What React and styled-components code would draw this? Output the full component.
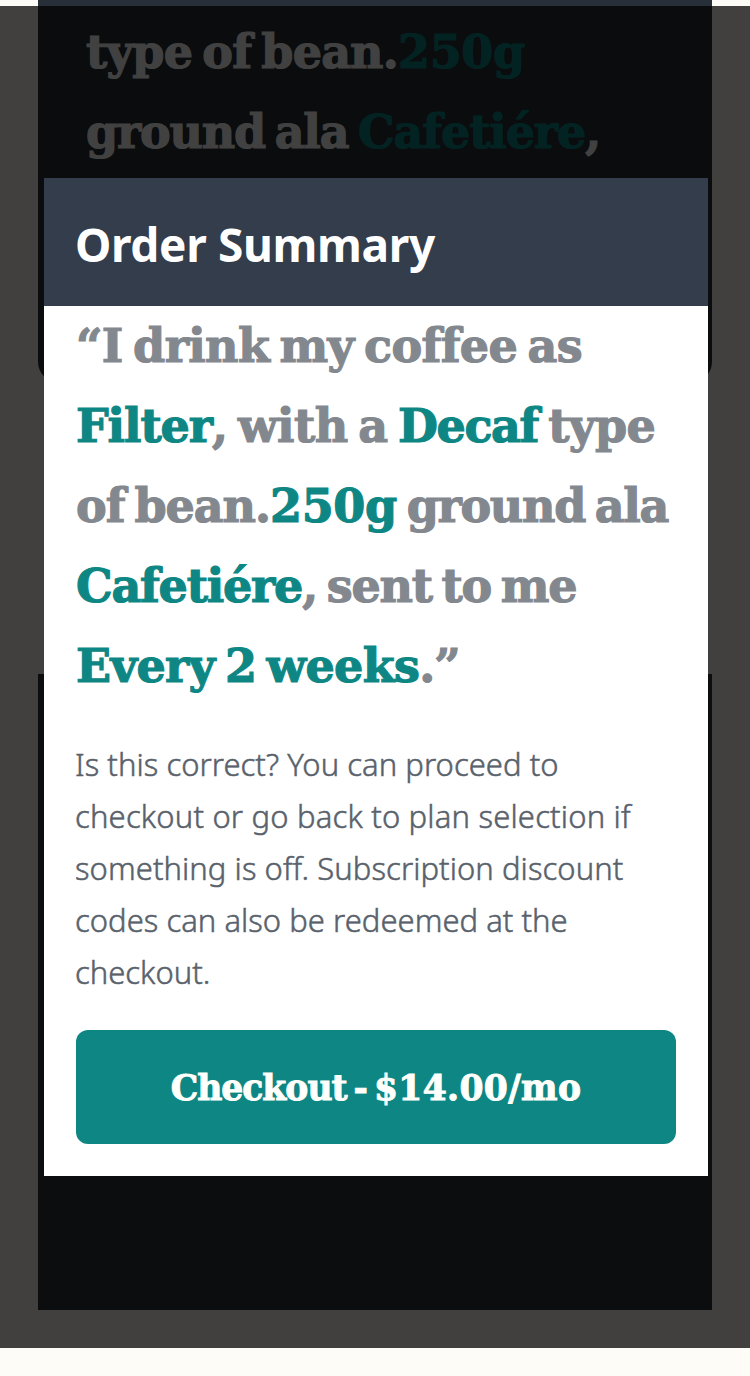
import React from 'react';
import styled, { createGlobalStyle } from 'styled-components';

const GlobalStyle = createGlobalStyle`
  * { box-sizing: border-box; }
  html, body { margin: 0; padding: 0; background: #fefcf7; }
  h2, p { margin: 0; }
`;

const serif = '"DejaVu Serif", serif';

const Page = styled.div`
  position: relative;
  height: 1376px;
  padding: 0 38px 66px;
  display: flex;
  flex-direction: column;
  justify-content: space-between;
  overflow: hidden;
  background: #fefcf7;
`;

const SummaryCard = styled.section`
  height: 382px;
  padding: 12px 48px 0;
  border-radius: 0 0 20px 20px;
  background: #272f38;
`;

const FooterCard = styled.footer`
  height: 636px;
  background: #2c343e;
`;

const Overlay = styled.div`
  position: absolute;
  top: 6px;
  left: 0;
  right: 0;
  height: 1342px;
  padding-left: 2px;
  display: flex;
  align-items: center;
  justify-content: center;
  background: rgba(0, 0, 0, 0.745);
`;

const Modal = styled.div`
  width: 664px;
  background: #fff;
`;

const ModalHeader = styled.header`
  height: 128px;
  padding: 4px 31px 0;
  display: flex;
  align-items: center;
  background: #333d4b;
`;

const Title = styled.h2`
  font: 700 46px/62px "Noto Sans", "Open Sans", sans-serif;
  letter-spacing: -0.35px;
  color: #fff;
`;

const ModalBody = styled.div`
  padding: 0 32px 32px;
`;

const Quote = styled.p`
  font: 700 46px/80px ${serif};
  word-spacing: -5px;
  color: ${p => p.$color};
  -webkit-text-stroke: 1.2px;
`;

const Line = styled.span`
  display: block;
  height: ${p => p.$height}px;
  white-space: pre;
  letter-spacing: ${p => p.$track || 0}px;
`;

const Words = styled.span`
  letter-spacing: ${p => p.$track}px;
`;

const Choice = styled(Words)`
  color: #0e8784;
`;

const Note = styled.p`
  margin: 32px -1px;
  font: 300 31px/52px "Noto Sans", "Open Sans", sans-serif;
  color: #59626c;
  -webkit-text-stroke: 0.5px;
`;

const CheckoutButton = styled.button`
  width: 100%;
  height: 114px;
  padding: 2px 0 0;
  display: block;
  border: 0;
  border-radius: 12px;
  background: #0e8784;
  color: #fffffb;
  font: 700 34.5px/40px ${serif};
  white-space: pre;
  word-spacing: -4px;
  -webkit-text-stroke: 1px;
`;

export default function App() {
  return (
    <>
      <GlobalStyle />
      <Page>
        <SummaryCard>
          <Quote $color="#fff">
            <Line $height={80}>
              <Words $track={-0.82}>type of bean.</Words>
              <Choice $track={-0.3}>250g</Choice>
            </Line>
            <Line $height={80}>
              <Words $track={-1.2}>{'ground ala '}</Words>
              <Choice $track={-1.1}>Cafetiére</Choice>,
            </Line>
          </Quote>
        </SummaryCard>
        <FooterCard />
        <Overlay>
          <Modal role="dialog">
            <ModalHeader>
              <Title>Order Summary</Title>
            </ModalHeader>
            <ModalBody>
              <Quote $color="#83888f">
                <Line $height={80}>
                  <Words $track={-0.63}>“I drink my coffee as</Words>
                </Line>
                <Line $height={80}>
                  <Choice $track={-1.07}>Filter</Choice>
                  <Words $track={-0.51}>{', with a '}</Words>
                  <Choice $track={-1.36}>Decaf</Choice>
                  <Words $track={-0.68}>{' type'}</Words>
                </Line>
                <Line $height={80}>
                  <Words $track={-1.03}>of bean.</Words>
                  <Choice $track={-0.3}>250g</Choice>
                  <Words $track={-1.3}>{' ground ala'}</Words>
                </Line>
                <Line $height={80}>
                  <Choice $track={-1.2}>Cafetiére</Choice>
                  <Words $track={-1.23}>, sent to me</Words>
                </Line>
                <Line $height={80}>
                  <Choice $track={-0.68}>Every 2 weeks</Choice>
                  <Words $track={-1}>.”</Words>
                </Line>
              </Quote>
              <Note>
                <Line $height={52} $track={0.04}>Is this correct? You can proceed to</Line>
                <Line $height={52} $track={0.18}>checkout or go back to plan selection if</Line>
                <Line $height={52} $track={0.06}>something is off. Subscription discount</Line>
                <Line $height={52} $track={0.02}>codes can also be redeemed at the</Line>
                <Line $height={52} $track={0}>checkout.</Line>
              </Note>
              <CheckoutButton>
                <Words $track={-0.95}>{'Checkout - '}</Words>
                <Words $track={0.35}>$14.00/mo</Words>
              </CheckoutButton>
            </ModalBody>
          </Modal>
        </Overlay>
      </Page>
    </>
  );
}
